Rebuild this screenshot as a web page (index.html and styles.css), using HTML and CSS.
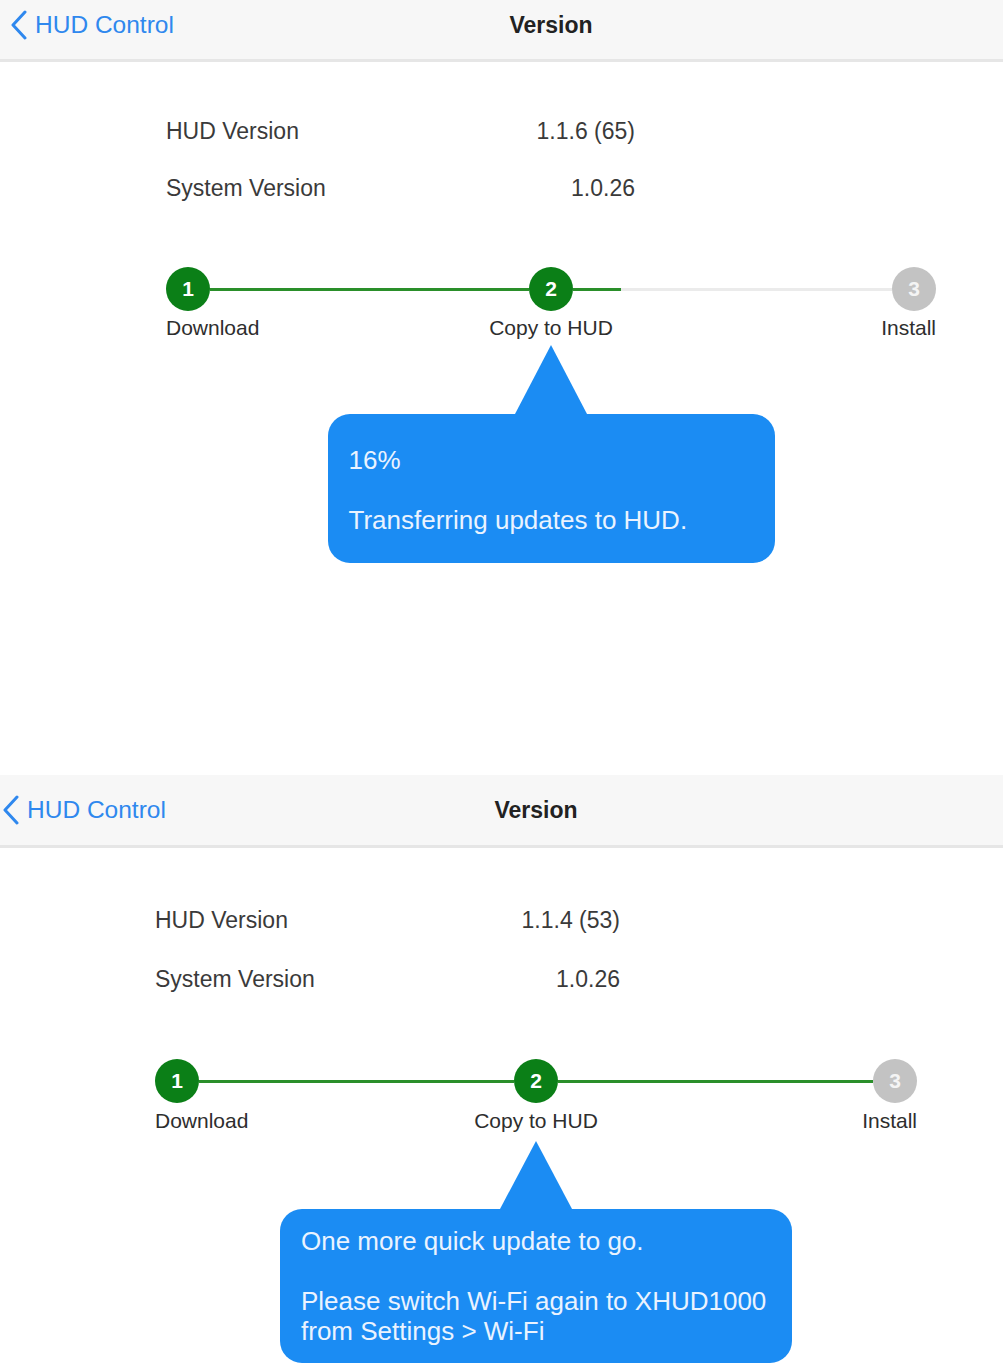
FILE: index.html
```html
<!DOCTYPE html>
<html lang="en">
<head>
  <meta charset="UTF-8" />
  <meta name="viewport" content="width=device-width, initial-scale=1.0"/>
  <title>HUD Control - Version</title>
  <link rel="stylesheet" href="styles.css">
</head>
<body>

  <!-- first capture: copying, 16% -->
  <div class="screen screen-one">
    <header class="navbar">
      <a class="back" href="#">
        <svg class="chevron" viewBox="0 0 17 30" width="17" height="30"><polyline points="15,2 3,15 15,28" fill="none" stroke="currentColor" stroke-width="3" stroke-linecap="round" stroke-linejoin="round"/></svg>
        HUD Control
      </a>
      <h1 class="title">Version</h1>
    </header>

    <main class="content">
      <dl class="info">
        <div class="info-row"><dt>HUD Version</dt><dd>1.1.6 (65)</dd></div>
        <div class="info-row"><dt>System Version</dt><dd>1.0.26</dd></div>
      </dl>

      <div class="stepper">
        <div class="steps">
          <span class="dot done">1</span>
          <span class="track"><span class="fill" style="width:100%"></span></span>
          <span class="dot done">2</span>
          <span class="track"><span class="fill" style="width:15%"></span></span>
          <span class="dot">3</span>
        </div>
        <div class="step-labels">
          <span>Download</span>
          <span>Copy to HUD</span>
          <span>Install</span>
        </div>
      </div>

      <div class="tip"></div>
      <div class="bubble">
        <p>16%</p>
        <p>Transferring updates to HUD.</p>
      </div>
    </main>
  </div>

  <!-- second capture: switch wifi -->
  <div class="screen screen-two">
    <header class="navbar">
      <a class="back" href="#">
        <svg class="chevron" viewBox="0 0 17 30" width="17" height="30"><polyline points="15,2 3,15 15,28" fill="none" stroke="currentColor" stroke-width="3" stroke-linecap="round" stroke-linejoin="round"/></svg>
        HUD Control
      </a>
      <h1 class="title">Version</h1>
    </header>

    <main class="content">
      <dl class="info">
        <div class="info-row"><dt>HUD Version</dt><dd>1.1.4 (53)</dd></div>
        <div class="info-row"><dt>System Version</dt><dd>1.0.26</dd></div>
      </dl>

      <div class="stepper">
        <div class="steps">
          <span class="dot done">1</span>
          <span class="track"><span class="fill" style="width:100%"></span></span>
          <span class="dot done">2</span>
          <span class="track"><span class="fill" style="width:100%"></span></span>
          <span class="dot">3</span>
        </div>
        <div class="step-labels">
          <span>Download</span>
          <span>Copy to HUD</span>
          <span>Install</span>
        </div>
      </div>

      <div class="tip"></div>
      <div class="bubble">
        <p>One more quick update to go.</p>
        <p>Please switch Wi-Fi again to XHUD1000<br>from Settings &gt; Wi-Fi</p>
      </div>
    </main>
  </div>

</body>
</html>
```

FILE: styles.css
```css
body {
  margin: 0;
  background: #fff;
  color: #3a3a3a;
  font-family: "Liberation Sans", Arial, sans-serif;
}

.screen-two {
  margin-top: 212px;
}

/* nav bar: back link and title share one cell,
   title is off-centre because the captures are cropped */
.navbar {
  display: grid;
  grid-template-columns: 1fr;
  align-items: center;
  height: 59px;
  background: #f7f7f7;
  border-bottom: 3px solid #e6e6e6;
}
.navbar > * {
  grid-area: 1 / 1;
}
.screen-one .navbar {
  align-items: start;
  padding-top: 10px;
  height: 49px;
}
.screen-two .navbar {
  height: 70px;
}
.back {
  justify-self: start;
  display: flex;
  align-items: center;
  gap: 8px;
  padding-left: 10px;
  color: #2f88ee;
  font-size: 24.5px;
  text-decoration: none;
}
.screen-two .back {
  padding-left: 2px;
}
.chevron {
  color: #2f88ee;
}
.title {
  justify-self: center;
  margin: 0 0 0 99px;
  font-size: 23px;
  font-weight: bold;
  color: #222;
}
.screen-one .title {
  margin-top: 2px;
}
.screen-two .title {
  margin-left: 69px;
}

/* content */
.content {
  padding: 0 67px 0 166px;
}
.screen-two .content {
  padding: 0 86px 0 155px;
}

.info {
  width: 469px;
  margin: 54px 0 0;
  font-size: 23px;
  line-height: 30px;
}
.screen-two .info {
  width: 465px;
  margin-top: 57px;
}
.info-row {
  display: flex;
  justify-content: space-between;
}
.info-row + .info-row {
  margin-top: 27px;
}
.screen-two .info-row + .info-row {
  margin-top: 29px;
}
.info dt, .info dd {
  margin: 0;
}

/* stepper */
.stepper {
  margin-top: 64px;
}
.screen-two .stepper {
  margin-top: 65px;
}
.steps {
  display: flex;
  align-items: center;
}
.dot {
  width: 44px;
  height: 44px;
  border-radius: 50%;
  background: #c3c3c3;
  color: #f4f4f4;
  font-size: 21px;
  font-weight: bold;
  display: flex;
  align-items: center;
  justify-content: center;
  flex: none;
}
.dot.done {
  background: #0b7f17;
  color: #fff;
}
.track {
  flex: 1;
  height: 3px;
  background: #ebebeb;
  display: flex;
}
.fill {
  background: #2a8f2a;
  height: 3px;
}
.step-labels {
  display: grid;
  grid-template-columns: 1fr auto 1fr;
  margin-top: 5px;
  font-size: 21px;
  line-height: 24px;
  color: #2e2e2e;
}
.screen-two .step-labels {
  margin-top: 6px;
}
.step-labels span:last-child {
  text-align: right;
}

/* bubble */
.tip {
  width: 72px;
  height: 69px;
  margin: 5px auto 0;
  background: #1b8cf3;
  clip-path: polygon(50% 0, 100% 100%, 0 100%);
}
.screen-two .tip {
  height: 68px;
  margin-top: 8px;
}
.bubble {
  width: 447px;
  margin: 0 auto;
  box-sizing: border-box;
  padding: 31px 21px 28px;
  background: #1b8cf3;
  border-radius: 22px;
  color: #eaf3ff;
  font-size: 26px;
  line-height: 30px;
}
.screen-two .bubble {
  width: 512px;
  padding: 17px 21px 17px;
}
.bubble p {
  margin: 0;
}
.bubble p + p {
  margin-top: 30px;
}
```
